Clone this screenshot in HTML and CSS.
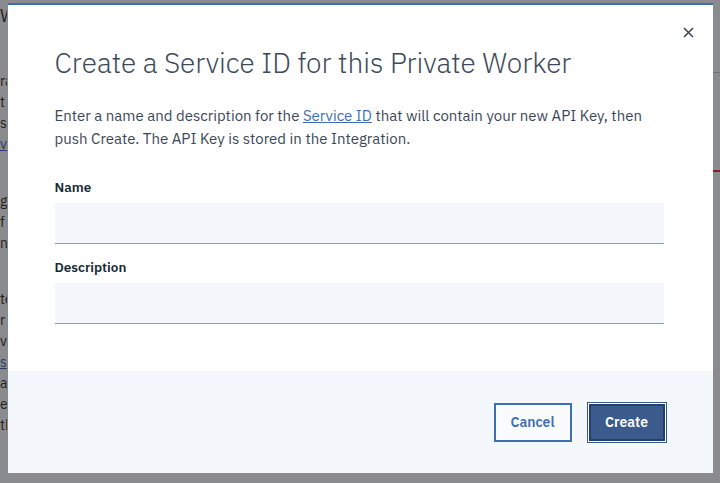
FILE: index.html
```html
<!DOCTYPE html>
<html lang="en">
<head>
<meta charset="utf-8">
<title>Create a Service ID</title>
<link rel="stylesheet" href="styles.css">
</head>
<body>
<div class="page">
  <div class="page-left">
    <div class="frag frag-title">Wi</div>
    <div class="frag-group g1">
      <div class="frag">ra</div>
      <div class="frag">t</div>
      <div class="frag">s</div>
      <div class="frag link">v</div>
    </div>
    <div class="frag-group g2">
      <div class="frag">ge</div>
      <div class="frag">f</div>
      <div class="frag">n</div>
    </div>
    <div class="frag-group g3">
      <div class="frag">te</div>
      <div class="frag">r</div>
      <div class="frag">v</div>
      <div class="frag link">s</div>
      <div class="frag">a</div>
      <div class="frag">e</div>
      <div class="frag">th</div>
    </div>
  </div>
  <div class="page-right">
    <div class="rule-grey"></div>
    <div class="rule-red"></div>
  </div>
</div>

<div class="overlay">
  <div class="modal" role="dialog" aria-labelledby="modal-title">
    <button class="close" aria-label="Close">
      <svg width="11" height="11" viewBox="0 0 11 11"><path d="M1 1 L10 10 M10 1 L1 10" stroke="#3d4a5a" stroke-width="1.6" fill="none"/></svg>
    </button>
    <div class="modal-body">
      <h2 id="modal-title" class="title">Create a Service ID for this Private Worker</h2>
      <p class="desc">Enter a name and description for the <a href="#">Service ID</a> that will contain your new API Key, then push Create. The API Key is stored in the Integration.</p>
      <div class="field">
        <label class="label" for="name">Name</label>
        <input id="name" class="input" type="text">
      </div>
      <div class="field">
        <label class="label" for="descr">Description</label>
        <input id="descr" class="input" type="text">
      </div>
    </div>
    <div class="modal-footer">
      <button class="btn btn-secondary">Cancel</button>
      <button class="btn btn-primary">Create</button>
    </div>
  </div>
</div>
</body>
</html>
```

FILE: styles.css
```css
* { box-sizing: border-box; }
html, body { margin: 0; padding: 0; }
body {
  width: 720px;
  height: 483px;
  overflow: hidden;
  background: #8a8b8e;
  font-family: "IBM Plex Sans", "Noto Sans", "Open Sans", sans-serif;
  position: relative;
}

.page {
  display: flex;
  justify-content: space-between;
  height: 483px;
}
.page-left {
  width: 7px;
  overflow: hidden;
  color: #1e1f22;
  font-size: 14px;
  line-height: 21px;
  padding-top: 4px;
}
.frag { white-space: nowrap; }
.frag-title { font-size: 18px; line-height: 24px; }
.frag.link { color: #1f3a66; text-decoration: underline; }
.g1 { margin-top: 43px; }
.g2 { margin-top: 36px; }
.g3 { margin-top: 35px; }

.page-right {
  width: 8px;
  display: flex;
  flex-direction: column;
}
.rule-grey { margin-top: 72px; height: 1px; background: #707276; }
.rule-red { margin-top: 97px; height: 2px; background: #8a1e22; }

.overlay {
  position: absolute;
  inset: 0;
  display: flex;
  justify-content: center;
  align-items: flex-start;
  padding-top: 3px;
}
.modal {
  position: relative;
  width: 705px;
  height: 470px;
  background: #fff;
  border-top: 2px solid #3d70b2;
  display: flex;
  flex-direction: column;
}
.close {
  position: absolute;
  top: 21px;
  right: 18px;
  width: 12px;
  height: 12px;
  padding: 0;
  border: 0;
  background: none;
  display: flex;
  align-items: center;
  justify-content: center;
}
.modal-body {
  flex: 1;
  padding: 40px 49px 0 47px;
}
.title {
  margin: 0;
  font-size: 28px;
  font-weight: 300;
  line-height: 36px;
  color: #3d4a5b;
}
.desc {
  margin: 23px 0 0;
  font-size: 15px;
  line-height: 23px;
  color: #3b4858;
}
.desc a { color: #3d70b2; text-decoration: underline; }
.field { margin-top: 28px; display: flex; flex-direction: column; }
.field + .field { margin-top: 14px; }
.label {
  font-size: 13.5px;
  font-weight: 600;
  line-height: 18px;
  color: #152935;
  margin-bottom: 7px;
}
.input {
  width: 609px;
  height: 41px;
  border: 0;
  border-bottom: 1px solid #8c9aa5;
  background: #f4f7fb;
  font: inherit;
}
.modal-footer {
  height: 102px;
  background: #f4f7fb;
  display: flex;
  justify-content: flex-end;
  align-items: center;
  padding-right: 48px;
  gap: 17px;
}
.btn {
  font-family: inherit;
  font-size: 14px;
  font-weight: 600;
  display: flex;
  align-items: center;
  justify-content: center;
  padding: 0;
}
.btn-secondary {
  width: 78px;
  height: 39px;
  border: 2px solid #3d70b2;
  background: #fafbfd;
  color: #3d70b2;
}
.btn-primary {
  width: 76px;
  height: 37px;
  border: 2px solid #223f6e;
  background: #3b5b8c;
  color: #fff;
  box-shadow: 0 0 0 1px #fff, 0 0 0 2px #3a5886;
}
```
